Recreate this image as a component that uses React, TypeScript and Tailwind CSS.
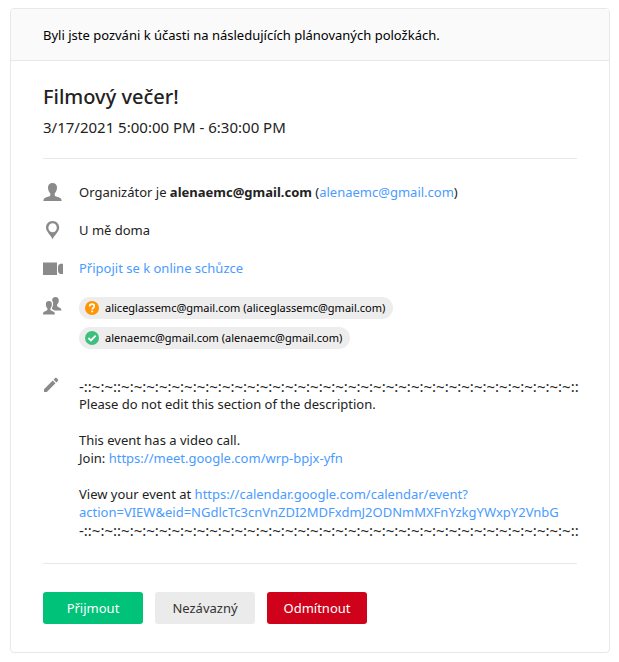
import type { ReactNode } from "react";

interface Attendee {
  email: string;
  status: "tentative" | "accepted";
}

const attendees: Attendee[] = [
  { email: "aliceglassemc@gmail.com", status: "tentative" },
  { email: "alenaemc@gmail.com", status: "accepted" },
];

const separator = "-::~:~::" + "~:".repeat(35) + "~::";

const linkCls = "text-[#4a9bff] hover:underline";
const buttonCls = "w-[100px] h-8 rounded-[3px] text-[13px] cursor-pointer";

function PersonIcon() {
  return (
    <svg width="20" height="20" viewBox="0 0 20 20" fill="#8a8a8a">
      <path d="M9.500 0C6.800 0 5 1.600 5 4.600c0 2.600 1 4.600 2.300 5.800v2C7.100 13.400 3.300 14 1.800 14.900.8 15.500.4 16.600.4 17.900h18.200c0-1.300-.4-2.400-1.400-3-1.500-.9-5.300-1.500-5.500-2.500v-2C13 9.200 14 7.200 14 4.600c0-3-1.800-4.600-4.500-4.600z" />
    </svg>
  );
}

function PinIcon() {
  return (
    <svg width="20" height="20" viewBox="0 0 20 20" fill="#8a8a8a" fillRule="evenodd">
      <path d="M9.600 0C5.800 0 3 2.900 3 6.500c0 4.100 4.500 7.300 6.600 11.700 2.100-4.400 6.600-7.600 6.600-11.700C16.200 2.900 13.400 0 9.600 0zm0 2.200a4.200 4.500 0 1 1 0 9 4.200 4.500 0 0 1 0-9z" />
    </svg>
  );
}

function CameraIcon() {
  return (
    <svg width="20" height="20" viewBox="0 0 20 20" fill="#8a8a8a">
      <path d="M0 3.500h14v12.500H0zM15 8c0-1.600 1.200-3.200 2.800-3.200H20V15h-2.200C16.200 15 15 13.300 15 11.700z" />
    </svg>
  );
}

function PeopleIcon() {
  return (
    <svg width="20" height="20" viewBox="0 0 20 20" fill="#8a8a8a">
      <path d="M5.900 4C4 4 2.900 5.200 2.900 7.200c0 1.800.6 3.200 1.500 4v1.600c0 .9-2 1.300-3.300 2C.3 15.300 0 16.200 0 17.400h11.800c0-1.200-.3-2.100-1.100-2.600-1.300-.7-3.300-1.100-3.300-2v-1.600c.9-.8 1.500-2.200 1.500-4C8.900 5.200 7.800 4 5.900 4z" />
      <path d="M12.500 0C10.300 0 9.100 1.300 9.100 3.600c.7.900 1.100 2.100 1 3.700-.1 1.700-.6 3.100-1.300 4.200.2.800 1.500 1.200 2.800 1.900h6.800c0-1.200-.3-2-1.200-2.500-1.300-.7-3.100-.9-3.100-1.900V7.500c1-.9 1.700-2.300 1.700-4C15.800 1.300 14.700 0 12.500 0z" />
    </svg>
  );
}

function PencilIcon() {
  return (
    <svg width="20" height="20" viewBox="0 0 20 20" fill="#8a8a8a">
      <path d="M1 12.200 9.700 3.500l2.800 2.800L3.800 15H1zM10.600 2.600l1.500-1.500c.5-.5 1-.5 1.500 0l1.300 1.300c.5.500.5 1 0 1.500l-1.500 1.500z" />
    </svg>
  );
}

function StatusIcon({ status }: { status: Attendee["status"] }) {
  if (status === "tentative") {
    return (
      <svg width="14" height="14" viewBox="0 0 14 14" fill="none">
        <circle cx="7" cy="7" r="7" fill="#ff9500" />
        <path d="M4.700 5.400c0-1.400.9-2.200 2.300-2.200s2.300.7 2.300 2C9.300 6.700 7.200 6.800 7.200 8.600" stroke="#fff" strokeWidth="1.700" />
        <path d="M6.300 9.600h1.800v1.700H6.300z" fill="#fff" />
      </svg>
    );
  }
  return (
    <svg width="14" height="14" viewBox="0 0 14 14" fill="none">
      <circle cx="7" cy="7" r="7" fill="#3cc07b" />
      <path d="m3.400 7 2.500 2.500 4.800-4.800" stroke="#fff" strokeWidth="1.800" />
    </svg>
  );
}

function InfoRow({ icon, children }: { icon: ReactNode; children: ReactNode }) {
  return (
    <div className="flex gap-4">
      <div className="w-5 h-[18px] shrink-0">{icon}</div>
      <div className="min-w-0 flex-1">{children}</div>
    </div>
  );
}

export default function App() {
  return (
    <main className="pt-2 pb-2 pl-2.5 pr-[9px] bg-white font-['Segoe_UI','Noto_Sans',sans-serif] text-[13px] leading-[18px] text-[#222]">
      <article className="border border-[#e8e8e8] rounded bg-white overflow-hidden">
        <header className="h-13 px-8 flex items-center bg-[#fafafa] border-b border-[#e8e8e8] text-black">
          Byli jste pozváni k účasti na následujících plánovaných položkách.
        </header>

        <div className="px-8 pt-6 pb-7">
          <h1 className="text-[20px] leading-6 font-medium">Filmový večer!</h1>
          <p className="mt-2 text-[15px] leading-5">3/17/2021 5:00:00 PM - 6:30:00 PM</p>

          {/* Event details */}
          <section className="mt-[21px] py-6 border-y border-[#e8e8e8] flex flex-col gap-5">
            <InfoRow icon={<PersonIcon />}>
              Organizátor je <b>alenaemc@gmail.com</b> (
              <a href="mailto:alenaemc@gmail.com" className={linkCls}>alenaemc@gmail.com</a>)
            </InfoRow>
            <InfoRow icon={<PinIcon />}>U mě doma</InfoRow>
            <InfoRow icon={<CameraIcon />}>
              <a href="https://meet.google.com/wrp-bpjx-yfn" className={linkCls}>
                Připojit se k online schůzce
              </a>
            </InfoRow>
            <InfoRow icon={<PeopleIcon />}>
              <ul className="flex flex-col items-start gap-2 pb-2">
                {attendees.map((a) => (
                  <li
                    key={a.email}
                    className="h-[22px] pl-1.5 pr-2 flex items-center gap-1.5 rounded-full bg-[#ededed] text-[11px] text-black"
                  >
                    <StatusIcon status={a.status} />
                    {a.email} ({a.email})
                  </li>
                ))}
              </ul>
            </InfoRow>
            <InfoRow icon={<PencilIcon />}>
              <div className="whitespace-nowrap">
                <p className="text-[15px] leading-[18px]">{separator}</p>
                <p>Please do not edit this section of the description.</p>
                <br />
                <p>This event has a video call.</p>
                <p>
                  Join:{" "}
                  <a href="https://meet.google.com/wrp-bpjx-yfn" className={linkCls}>
                    https://meet.google.com/wrp-bpjx-yfn
                  </a>
                </p>
                <br />
                <p>
                  View your event at{" "}
                  <a href="https://calendar.google.com/calendar/event" className={linkCls}>
                    https://calendar.google.com/calendar/event?
                    <br />
                    action=VIEW&amp;eid=NGdlcTc3cnVnZDI2MDFxdmJ2ODNmMXFnYzkgYWxpY2VnbG
                  </a>
                </p>
                <p className="text-[15px] leading-[18px]">{separator}</p>
              </div>
            </InfoRow>
          </section>

          {/* Response buttons */}
          <div className="mt-7 flex gap-3">
            <button type="button" className={`${buttonCls} bg-[#00c278] text-white`}>
              Přijmout
            </button>
            <button type="button" className={`${buttonCls} bg-[#ebebeb] text-[#333]`}>
              Nezávazný
            </button>
            <button type="button" className={`${buttonCls} bg-[#d0021b] text-white`}>
              Odmítnout
            </button>
          </div>
        </div>
      </article>
    </main>
  );
}
